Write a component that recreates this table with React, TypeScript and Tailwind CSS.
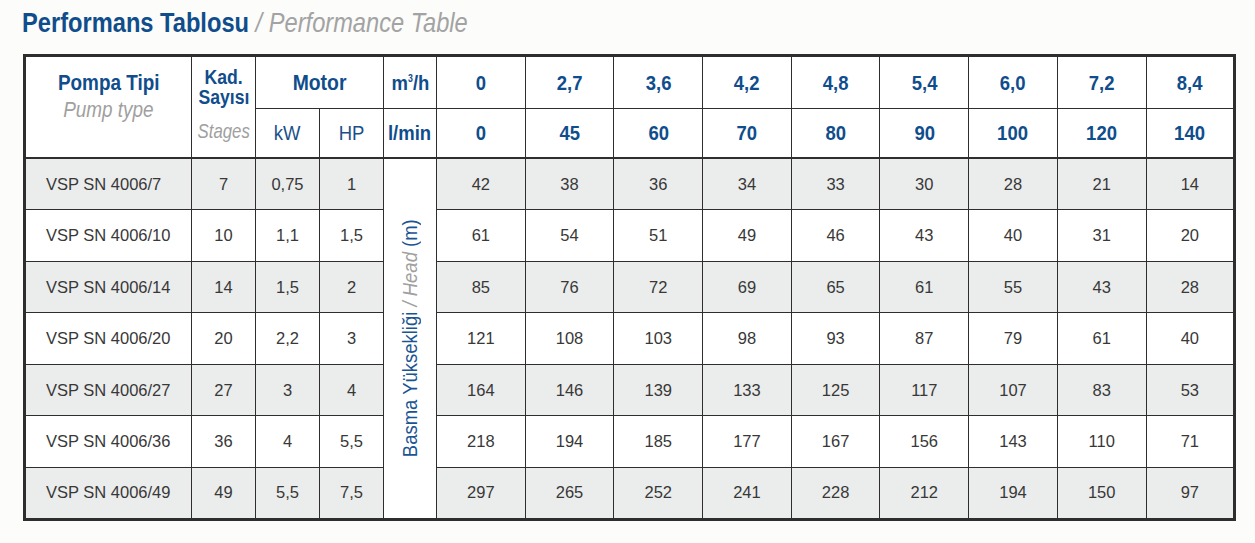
import React from 'react';

const flows = [
  ['0', '0'],
  ['2,7', '45'],
  ['3,6', '60'],
  ['4,2', '70'],
  ['4,8', '80'],
  ['5,4', '90'],
  ['6,0', '100'],
  ['7,2', '120'],
  ['8,4', '140'],
];

const rows = [
  { name: 'VSP SN 4006/7', st: '7', kw: '0,75', hp: '1', head: ['42', '38', '36', '34', '33', '30', '28', '21', '14'] },
  { name: 'VSP SN 4006/10', st: '10', kw: '1,1', hp: '1,5', head: ['61', '54', '51', '49', '46', '43', '40', '31', '20'] },
  { name: 'VSP SN 4006/14', st: '14', kw: '1,5', hp: '2', head: ['85', '76', '72', '69', '65', '61', '55', '43', '28'] },
  { name: 'VSP SN 4006/20', st: '20', kw: '2,2', hp: '3', head: ['121', '108', '103', '98', '93', '87', '79', '61', '40'] },
  { name: 'VSP SN 4006/27', st: '27', kw: '3', hp: '4', head: ['164', '146', '139', '133', '125', '117', '107', '83', '53'] },
  { name: 'VSP SN 4006/36', st: '36', kw: '4', hp: '5,5', head: ['218', '194', '185', '177', '167', '156', '143', '110', '71'] },
  { name: 'VSP SN 4006/49', st: '49', kw: '5,5', hp: '7,5', head: ['297', '265', '252', '241', '228', '212', '194', '150', '97'] },
];

const cell = 'border border-[#2e2e2e] text-center';

// condensed header label: Liberation Sans squeezed horizontally
function Cond({ children, className = '' }: { children: React.ReactNode; className?: string }) {
  return (
    <div className="flex justify-center whitespace-nowrap">
      <span className={`inline-block scale-x-[0.88] ${className}`}>{children}</span>
    </div>
  );
}

export default function App() {
  return (
    <div className="min-h-screen bg-[#fcfcfa] pl-[22px] pt-[6px] font-['Liberation_Sans',sans-serif]">
      <h1 className="inline-block origin-left scale-x-[0.845] whitespace-nowrap text-[28px] leading-[34px]">
        <span className="font-bold text-[#0f4d8c]">Performans Tablosu</span>
        <span className="italic text-[#a3a3a3]"> / Performance Table</span>
      </h1>

      <table className="mt-[14px] ml-px w-[1210px] table-fixed border-collapse border-[3px] border-[#2e2e2e]">
        <colgroup>
          <col className="w-[167px]" />
          <col className="w-[64px]" />
          <col className="w-[64px]" />
          <col className="w-[64px]" />
          <col className="w-[53px]" />
          {flows.map((_, i) => (
            <col key={i} className="w-[88.7px]" />
          ))}
        </colgroup>
        <thead className="bg-white">
          <tr className="h-[53px]">
            <th rowSpan={2} className={`${cell} border-b-2 align-top pt-[13px] font-normal`}>
              <Cond className="text-[21.5px] leading-[26px] font-bold text-[#0f4d8c]">Pompa Tipi</Cond>
              <Cond className="text-[21.5px] leading-[28px] italic text-[#a0a0a0]">Pump type</Cond>
            </th>
            <th rowSpan={2} className={`${cell} border-b-2 align-top font-normal`}>
              <div className="flex h-[100px] flex-col">
                <div className="pt-[10px]">
                  <Cond className="text-[20px] leading-[20px] font-bold text-[#0f4d8c]">Kad.</Cond>
                  <Cond className="text-[20px] leading-[20px] font-bold text-[#0f4d8c]">Sayısı</Cond>
                </div>
                <div className="mt-auto flex justify-center pb-[14px] whitespace-nowrap">
                  <span className="inline-block scale-x-[0.8] text-[21px] leading-[24px] italic text-[#a0a0a0]">Stages</span>
                </div>
              </div>
            </th>
            <th colSpan={2} className={cell}>
              <Cond className="text-[22px] font-bold text-[#0f4d8c]">Motor</Cond>
            </th>
            <th className={cell}>
              <Cond className="text-[21px] font-bold text-[#0f4d8c]">
                m<sup className="-top-[8px] text-[10px]">3</sup>/h
              </Cond>
            </th>
            {flows.map((f, i) => (
              <th key={i} className={cell}>
                <Cond className="text-[21px] font-bold text-[#0f4d8c]">{f[0]}</Cond>
              </th>
            ))}
          </tr>
          <tr className="h-[49px]">
            <th className={`${cell} border-b-2 font-normal`}>
              <Cond className="text-[21px] text-[#1a4f8a]">kW</Cond>
            </th>
            <th className={`${cell} border-b-2 font-normal`}>
              <Cond className="text-[21px] text-[#1a4f8a]">HP</Cond>
            </th>
            <th className={`${cell} border-b-2`}>
              <Cond className="text-[21px] font-bold text-[#0f4d8c]">l/min</Cond>
            </th>
            {flows.map((f, i) => (
              <th key={i} className={`${cell} border-b-2`}>
                <Cond className="text-[21px] font-bold text-[#0f4d8c]">{f[1]}</Cond>
              </th>
            ))}
          </tr>
        </thead>
        <tbody className="text-[16.5px] text-[#383838]">
          {rows.map((r, ri) => (
            <tr key={r.name} className={`h-[51.6px] ${ri % 2 === 0 ? 'bg-[#ebecec]' : 'bg-white'}`}>
              <td className="border border-[#2e2e2e] pl-[20px] text-left">{r.name}</td>
              <td className={cell}>{r.st}</td>
              <td className={cell}>{r.kw}</td>
              <td className={cell}>{r.hp}</td>
              {ri === 0 && (
                <td rowSpan={7} className={`${cell} bg-white align-middle`}>
                  <div className="flex justify-center">
                    <div className="rotate-180 scale-y-[0.88] whitespace-nowrap text-[21px] leading-[24px] text-[#1a5593] [writing-mode:vertical-rl]">
                      Basma Yüksekliği <span className="italic text-[#a0a0a0]">/ Head</span> (m)
                    </div>
                  </div>
                </td>
              )}
              {r.head.map((h, i) => (
                <td key={i} className={cell}>
                  {h}
                </td>
              ))}
            </tr>
          ))}
        </tbody>
      </table>
    </div>
  );
}
